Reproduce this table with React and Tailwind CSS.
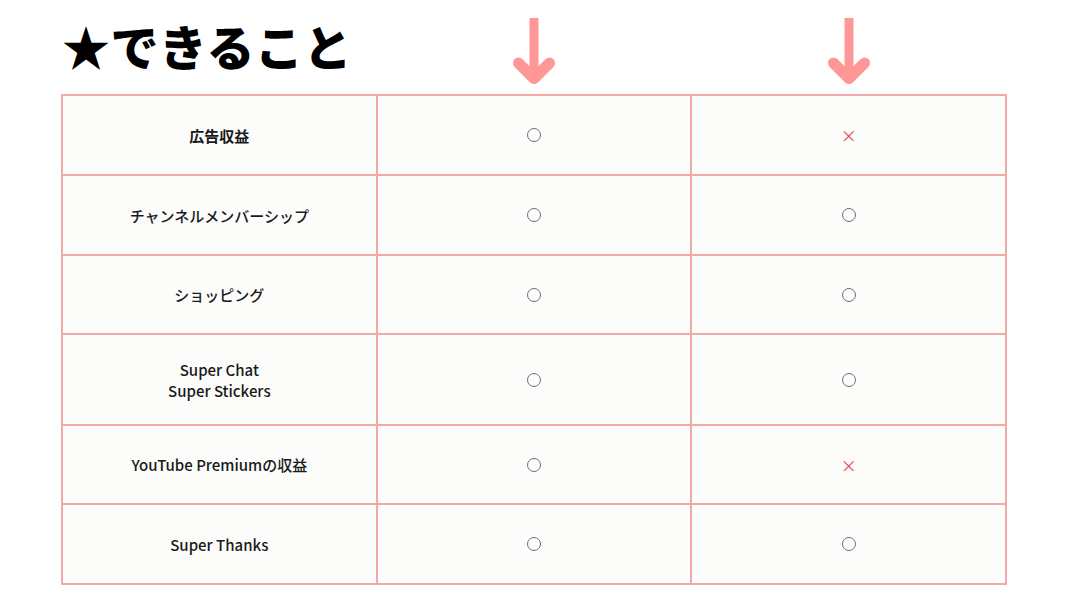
import React from 'react';

const rows = [
  { label: ['広告収益'], bold: true, a: 'o', b: 'x', h: 'h-[80px]' },
  { label: ['チャンネルメンバーシップ'], a: 'o', b: 'o', h: 'h-[80px]' },
  { label: ['ショッピング'], a: 'o', b: 'o', h: 'h-[79px]' },
  { label: ['Super Chat', 'Super Stickers'], a: 'o', b: 'o', h: 'h-[91px]' },
  { label: ['YouTube Premiumの収益'], a: 'o', b: 'x', h: 'h-[79px]' },
  { label: ['Super Thanks'], a: 'o', b: 'o', h: 'h-[80px]' },
];

const Arrow = () => (
  <svg width="50" height="68" viewBox="0 0 50 68" fill="none">
    <path d="M25 0 L25 58" stroke="#ff9797" strokeWidth="9" />
    <path d="M9.5 45 L25 60.5 L40.5 45" stroke="#ff9797" strokeWidth="11" strokeLinecap="round" strokeLinejoin="round" />
  </svg>
);

const Mark = ({ type }) =>
  type === 'o' ? (
    <span className="inline-block w-[14px] h-[14px] rounded-full border border-[#6f6f6f]" />
  ) : (
    <span className="text-[#e24a58] text-[16px] leading-none">×</span>
  );

export default function App() {
  return (
    <div
      className="w-[1067px] h-[600px] bg-white"
      style={{ fontFamily: '"Noto Sans CJK JP", "Noto Sans", sans-serif' }}
    >
      <div className="ml-[61px] w-[946px]">
        <div className="grid grid-cols-3 h-[94px]">
          <div className="pt-[21px] pl-[1px]">
            <h1 className="text-[48px] font-black leading-none text-black tracking-[0.5px]">★できること</h1>
          </div>
          <div className="flex justify-center pt-[18px]">
            <Arrow />
          </div>
          <div className="flex justify-center pt-[18px]">
            <Arrow />
          </div>
        </div>
        <table className="w-full border-collapse table-fixed border-2 border-[#f3a9aa]">
          <tbody>
            {rows.map((r, i) => (
              <tr key={i} className={r.h}>
                <td className="border-2 border-[#f3a9aa] bg-[#fcfcfa] text-center align-middle">
                  <div className={`text-[15px] leading-[21px] text-[#1a1a1a] ${r.bold ? 'font-bold' : 'font-medium'}`}>
                    {r.label.map((l) => (
                      <div key={l}>{l}</div>
                    ))}
                  </div>
                </td>
                <td className="border-2 border-[#f3a9aa] bg-[#fcfcfa] text-center align-middle">
                  <div className="flex justify-center items-center">
                    <Mark type={r.a} />
                  </div>
                </td>
                <td className="border-2 border-[#f3a9aa] bg-[#fcfcfa] text-center align-middle">
                  <div className="flex justify-center items-center">
                    <Mark type={r.b} />
                  </div>
                </td>
              </tr>
            ))}
          </tbody>
        </table>
      </div>
    </div>
  );
}
